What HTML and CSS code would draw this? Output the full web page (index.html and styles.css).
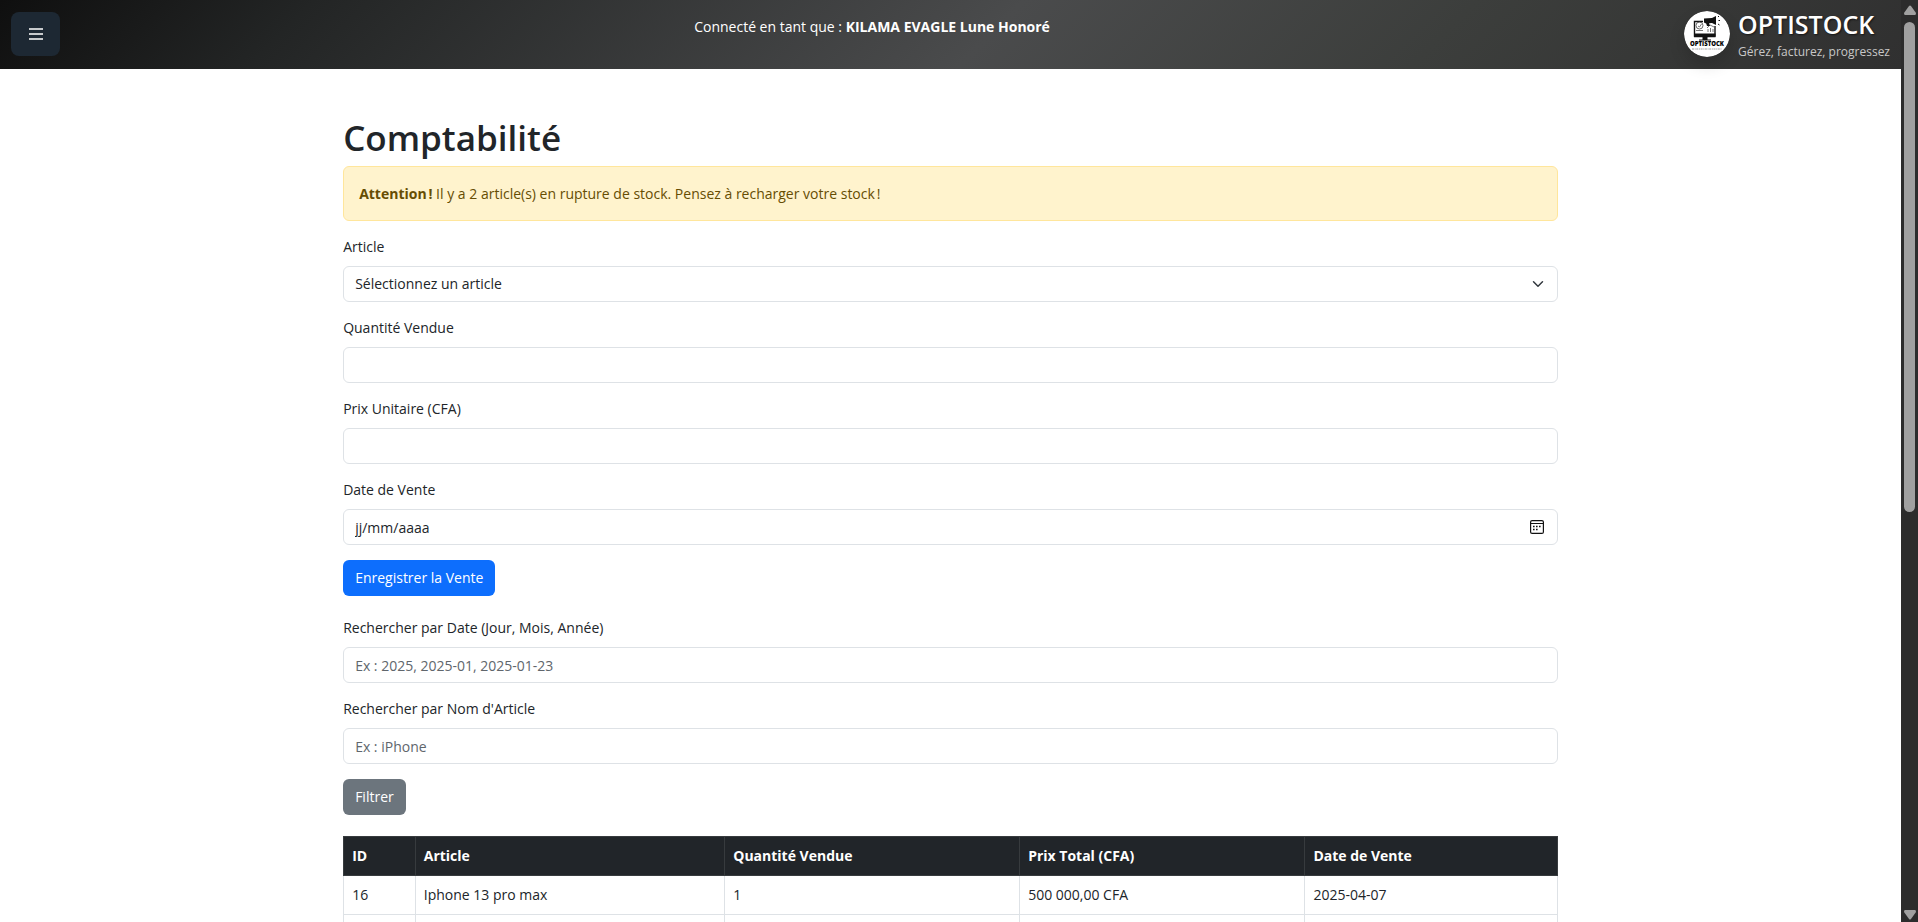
FILE: index.html
```html
<!DOCTYPE html>
<html lang="fr">
<head>
<meta charset="utf-8">
<title>Comptabilité – OPTISTOCK</title>
<link rel="stylesheet" href="styles.css">
</head>
<body>
<div class="window">
  <div class="page">
    <header class="topbar">
      <button class="menu-toggle" type="button" aria-label="Menu">
        <svg width="14" height="12" viewBox="0 0 14 12" aria-hidden="true"><path d="M0 1h14M0 6h14M0 11h14" stroke="#fff" stroke-width="1.4"/></svg>
      </button>
      <p class="session">Connecté en tant que : <strong>KILAMA EVAGLE Lune Honoré</strong></p>
      <div class="brand">
        <svg class="brand-logo" viewBox="0 0 46 46" aria-hidden="true">
          <circle cx="23" cy="23" r="23" fill="#fff"/>
          <path d="M19 10.500H10.500V25H31V15" fill="none" stroke="#111" stroke-width="1.400"/>
          <path d="M10 22.500h21.500v3.800H10zM18.500 26h5v3h-5zM15 28.500h12v1H15z" fill="#111"/>
          <circle cx="15.500" cy="14.500" r="3.500" fill="none" stroke="#444" stroke-width=".8"/>
          <path d="M14 15l1.500 1 2-3M12 19.500h7M24 21v-3M26.500 21v-4M29 21v-3M23 17l3-3 4 2" fill="none" stroke="#555" stroke-width=".8"/>
          <path d="M20 7.500l8-.5 4-2v9l-4-2-6 .5-2-1zM22 12h3l1 3h-3z" fill="#111"/>
          <path d="M34 6l1-1M34.500 9.500h1.500M34 13l1.500 1" stroke="#111" stroke-width="1"/>
          <text x="23" y="35" text-anchor="middle" class="logo-name">OPTISTOCK</text>
          <path d="M8 38h30" stroke="#777" stroke-width=".7" stroke-dasharray="2 .7 1 .6"/>
        </svg>
        <div class="brand-text">
          <span class="brand-name">OPTISTOCK</span>
          <span class="brand-tagline">Gérez, facturez, progressez</span>
        </div>
      </div>
    </header>

    <main class="container">
      <h1>Comptabilité</h1>
      <div class="alert" role="alert"><strong>Attention&#8239;!</strong> Il y a 2 article(s) en rupture de stock. Pensez à recharger votre stock&#8239;!</div>

      <form class="form">
        <div class="field">
          <label for="article">Article</label>
          <select id="article" class="control select"><option>Sélectionnez un article</option></select>
        </div>
        <div class="field">
          <label for="quantite">Quantité Vendue</label>
          <input id="quantite" class="control" type="text" inputmode="numeric">
        </div>
        <div class="field">
          <label for="prix">Prix Unitaire (CFA)</label>
          <input id="prix" class="control" type="text" inputmode="decimal">
        </div>
        <div class="field">
          <label for="date">Date de Vente</label>
          <div class="date-box">
            <input id="date" class="control" type="text" value="jj/mm/aaaa">
            <svg class="date-icon" width="14" height="14" viewBox="0 0 14 14" aria-hidden="true">
              <rect x=".6" y=".6" width="12.800" height="12.800" rx="1.500" fill="none" stroke="#111" stroke-width="1.200"/>
              <path d="M1 3.500h12" stroke="#111"/>
              <path d="M3 6.500h1.600M6 6.500h1.600M9 6.500h1.600M3 9.500h1.600M6 9.500h1.600" stroke="#111" stroke-width="1.600"/>
            </svg>
          </div>
        </div>
        <button class="btn btn-primary" type="submit">Enregistrer la Vente</button>
      </form>

      <form class="form">
        <div class="field">
          <label for="search-date">Rechercher par Date (Jour, Mois, Année)</label>
          <input id="search-date" class="control" type="text" placeholder="Ex : 2025, 2025-01, 2025-01-23">
        </div>
        <div class="field">
          <label for="search-name">Rechercher par Nom d'Article</label>
          <input id="search-name" class="control" type="text" placeholder="Ex : iPhone">
        </div>
        <button class="btn btn-secondary" type="submit">Filtrer</button>
      </form>

      <table class="sales">
        <colgroup><col class="col-id"><col class="col-article"><col class="col-qty"><col class="col-total"><col></colgroup>
        <thead>
          <tr><th>ID</th><th>Article</th><th>Quantité Vendue</th><th>Prix Total (CFA)</th><th>Date de Vente</th></tr>
        </thead>
        <tbody>
          <tr><td>16</td><td>Iphone 13 pro max</td><td>1</td><td>500 000,00 CFA</td><td>2025-04-07</td></tr>
          <tr><td>&nbsp;</td><td></td><td></td><td></td><td></td></tr>
        </tbody>
      </table>
    </main>
  </div>

  <div class="scrollbar" aria-hidden="true">
    <svg width="12" height="10" viewBox="0 0 12 10"><path d="M5 1Q6 0 7 1l5 7q0 2-1 2H1q-1 0-1-2z" fill="#a0a0a0"/></svg>
    <div class="scroll-track"><div class="scroll-thumb"></div></div>
    <svg width="12" height="10" viewBox="0 0 12 10"><path d="M5 9Q6 10 7 9l5-7q0-2-1-2H1Q0 0 0 2z" fill="#a0a0a0"/></svg>
  </div>
</div>
</body>
</html>
```
FILE: styles.css
```css
* { box-sizing: border-box; }

body {
  margin: 0;
  font-family: "Open Sans", "Noto Sans", sans-serif;
  font-size: 14px;
  line-height: 22px;
  color: #212529;
  background: #fff;
}

.window {
  display: grid;
  grid-template-columns: 1fr 17px;
  height: 100vh;
}

.page {
  min-width: 0;
  overflow: hidden;
}

.topbar {
  display: flex;
  justify-content: space-between;
  align-items: flex-start;
  padding: 11px 11px 6px;
  background: linear-gradient(135deg, #0f0f0f, #232525 16%, #4a4b4c 52%, #3c3e3c 75%, #303030);
  color: #fff;
}

.menu-toggle {
  display: flex;
  align-items: center;
  justify-content: center;
  width: 49px;
  height: 44px;
  margin-top: 1px;
  border: 0;
  border-radius: 8px;
  background: #1d2833;
}

.session {
  margin: 5px 0 0;
}

.brand {
  display: flex;
  align-items: flex-start;
  gap: 8px;
}

.brand-logo {
  width: 46px;
  height: 46px;
  border-radius: 50%;
  box-shadow: 0 8px 16px rgba(0, 0, 0, 0.15);
}

.logo-name {
  font: 800 6px "Open Sans", sans-serif;
}

.brand-text {
  display: flex;
  flex-direction: column;
  gap: 4px;
}

.brand-name {
  font-size: 25px;
  font-weight: 600;
  line-height: 26px;
  text-shadow: 1px 1px 2px rgba(0, 0, 0, 0.6);
}

.brand-tagline {
  font-size: 12px;
  line-height: 22px;
  color: #c8c8c8;
}

.container {
  width: 63.9%;
  margin: 0 auto;
  padding-top: 46px;
}

h1 {
  margin: 0 0 6px;
  font-size: 35px;
  font-weight: 600;
  line-height: 45px;
}

.alert {
  margin-bottom: 15px;
  padding: 16px 15px 15px;
  border: 1px solid #ffe69c;
  border-radius: 6px;
  background: #fff3cd;
  color: #664d03;
}

.form {
  margin-bottom: 21px;
}

.field {
  margin-bottom: 15px;
}

.field label {
  display: block;
  margin-bottom: 8px;
}

.control {
  display: block;
  width: 100%;
  height: 36px;
  padding: 0 11px;
  border: 1px solid #dee2e6;
  border-radius: 6px;
  background: #fff;
  color: #212529;
  font: inherit;
}

.control::placeholder {
  color: #60666c;
  opacity: 1;
}

.select {
  appearance: none;
  background: #fff url("data:image/svg+xml,%3Csvg xmlns='http://www.w3.org/2000/svg' viewBox='0 0 16 16'%3E%3Cpath fill='none' stroke='%23343a40' stroke-linecap='round' stroke-linejoin='round' stroke-width='2' d='m2 5 6 6 6-6'/%3E%3C/svg%3E") no-repeat right 13px center / 12px;
}

.date-box {
  position: relative;
}

.date-icon {
  position: absolute;
  top: 11px;
  right: 14px;
}

.btn {
  display: block;
  height: 36px;
  padding: 0 12px;
  border: 0;
  border-radius: 6px;
  color: #fff;
  font: inherit;
}

.btn-primary { background: #0d6efd; }
.btn-secondary { background: #6c757d; }

.sales {
  width: 100%;
  table-layout: fixed;
  border-collapse: collapse;
}

.col-id { width: 5.9%; }
.col-article { width: 25.5%; }
.col-qty { width: 24.3%; }
.col-total { width: 23.5%; }

.sales th,
.sales td {
  padding: 8px;
  border: 1px solid #dee2e6;
  text-align: left;
}

.sales th {
  border-color: #373b3e;
  background: #212529;
  color: #fff;
}

.scrollbar {
  display: flex;
  flex-direction: column;
  align-items: center;
  gap: 7px;
  padding: 5px 0 2px;
  background: #2c2c2c;
}

.scroll-track {
  flex: 1;
  width: 11px;
}

.scroll-thumb {
  height: 55.6%;
  border-radius: 6px;
  background: #a0a0a0;
}
```
